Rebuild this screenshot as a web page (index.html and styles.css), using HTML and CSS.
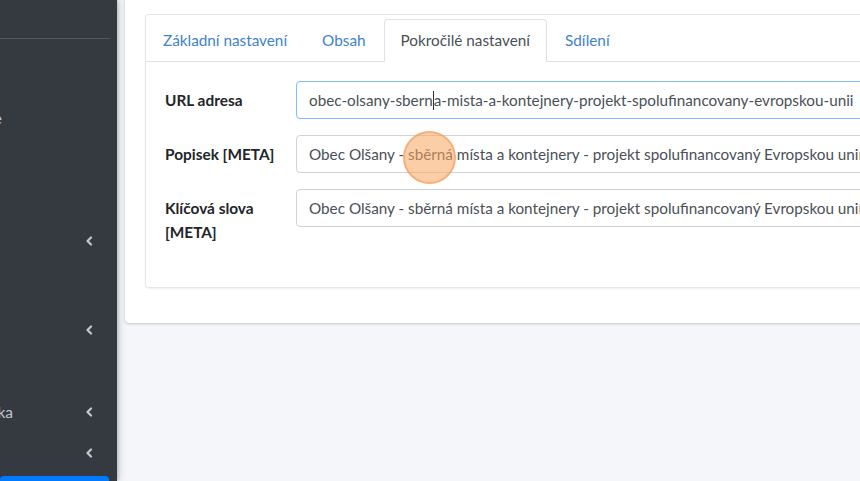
FILE: index.html
```html
<!DOCTYPE html>
<html lang="cs">
<head>
<meta charset="utf-8">
<title>Pokročilé nastavení</title>
<link rel="stylesheet" href="styles.css">
</head>
<body>
<aside class="sidebar">
  <div class="brand"></div>
  <ul class="nav">
    <li class="nav-item"><a class="nav-link"><span class="nav-text sliver"><span>Navigace</span></span></a></li>
    <li class="nav-item"><a class="nav-link"></a></li>
    <li class="nav-item"><a class="nav-link"></a></li>
    <li class="nav-item"><a class="nav-link"><span class="nav-text"></span><svg class="chev" viewBox="0 0 8 10"><polyline points="6,1.5 2.5,5 6,8.5"/></svg></a></li>
    <li class="nav-item tall"><a class="nav-link"></a></li>
    <li class="nav-item"><a class="nav-link"><span class="nav-text"></span><svg class="chev" viewBox="0 0 8 10"><polyline points="6,1.5 2.5,5 6,8.5"/></svg></a></li>
    <li class="nav-item"><a class="nav-link"></a></li>
    <li class="nav-item"><a class="nav-link"><span class="nav-text"><span>Statistika</span></span><svg class="chev" viewBox="0 0 8 10"><polyline points="6,1.5 2.5,5 6,8.5"/></svg></a></li>
    <li class="nav-item"><a class="nav-link"><span class="nav-text"></span><svg class="chev" viewBox="0 0 8 10"><polyline points="6,1.5 2.5,5 6,8.5"/></svg></a></li>
    <li class="nav-item"><a class="nav-link active"><span class="nav-text"></span></a></li>
  </ul>
</aside>
<main class="content">
  <section class="card-outer">
    <div class="card-tabs">
      <div class="tabs-header">
        <ul class="tabs">
          <li class="tab">Základní nastavení</li>
          <li class="tab">Obsah</li>
          <li class="tab active">Pokročilé nastavení</li>
          <li class="tab">Sdílení</li>
        </ul>
      </div>
      <div class="card-body">
        <div class="form-row">
          <label class="form-label">URL adresa</label>
          <div class="form-input focus"><span>obec-olsany-sbern</span><span class="caret"></span><span>a-mista-a-kontejnery-projekt-spolufinancovany-evropskou-unii</span></div>
        </div>
        <div class="form-row">
          <label class="form-label">Popisek [META]</label>
          <div class="form-input">Obec Olšany - sběrná místa a kontejnery - projekt spolufinancovaný Evropskou unií</div>
        </div>
        <div class="form-row">
          <label class="form-label">Klíčová slova [META]</label>
          <div class="form-input">Obec Olšany - sběrná místa a kontejnery - projekt spolufinancovaný Evropskou unií</div>
        </div>
      </div>
    </div>
  </section>
</main>
<div class="click-marker"></div>
</body>
</html>
```
FILE: styles.css
```css
* { box-sizing: border-box; }
html, body { margin: 0; padding: 0; }
body {
  width: 860px;
  height: 481px;
  overflow: hidden;
  display: flex;
  background: #f4f6f9;
  font-family: "Lato", "Liberation Sans", sans-serif;
  font-size: 16px;
  color: #212529;
}

/* Sidebar */
.sidebar {
  width: 117px;
  flex: none;
  background: #343a40;
  box-shadow: 1px 0 3px rgba(0,0,0,.18), 3px 0 8px rgba(0,0,0,.12);
  position: relative;
  z-index: 2;
  overflow: hidden;
}
.brand {
  height: 39px;
  margin-right: 7px;
  border-bottom: 1px solid #4f5962;
}
.nav {
  list-style: none;
  margin: 0;
  padding: 58px 8px 0 0;
}
.nav-item { height: 41px; }
.nav-item.tall { height: 48px; }
.nav-link {
  display: flex;
  align-items: center;
  height: 100%;
  color: #c2c7d0;
  font-size: 15.5px;
}
.nav-text {
  width: 13px;
  display: flex;
  justify-content: flex-end;
  white-space: nowrap;
}
.nav-text.sliver { width: 2px; }
.chev {
  width: 8px;
  height: 10px;
  margin-left: auto;
  margin-right: 16px;
  fill: none;
  stroke: #c2c7d0;
  stroke-width: 2.2;
  stroke-linecap: round;
  stroke-linejoin: round;
}
.nav-link.active {
  background: #007bff;
  border-radius: 4px;
  height: 34px;
  margin-top: 3px;
}

/* Content */
.content {
  flex: 1;
  min-width: 0;
  overflow: hidden;
  padding: 0 0 0 8px;
}
.card-outer {
  width: 1100px;
  margin-top: -10px;
  background: #fff;
  border-radius: 4px;
  box-shadow: 0 0 1px rgba(0,0,0,.14), 0 1px 3px rgba(0,0,0,.18);
  padding: 24px 20px 35px 20px;
}
.card-tabs {
  border: 1px solid #e3e6ea;
  border-radius: 4px;
  background: #fff;
  box-shadow: 0 1px 2px rgba(0,0,0,.06);
}
.tabs-header {
  padding-top: 4px;
  border-bottom: 1px solid #dee2e6;
}
.tabs {
  list-style: none;
  margin: 0 0 -1px 0;
  padding: 0;
  display: flex;
}
.tab {
  height: 43px;
  line-height: 41px;
  padding: 0 16px;
  margin-right: 1px;
  font-size: 15.3px;
  color: #3f82cc;
  border: 1px solid transparent;
  border-radius: 4px 4px 0 0;
  white-space: nowrap;
}
.tab.active {
  color: #495057;
  background: #fff;
  border-color: #dee2e6 #dee2e6 #fff;
}

.card-body {
  padding: 19px 20px 43px 19px;
  display: flex;
  flex-direction: column;
  gap: 16px;
}
.form-row {
  display: grid;
  grid-template-columns: 116px 1fr;
  column-gap: 15px;
  align-items: start;
}
.form-label {
  font-weight: 700;
  font-size: 15.4px;
  line-height: 24px;
  padding-top: 7px;
  color: #212529;
}
.form-input {
  height: 38px;
  line-height: 36px;
  padding: 0 12px;
  border: 1px solid #ced4da;
  border-radius: 4px;
  font-size: 15.28px;
  color: #495057;
  white-space: nowrap;
  overflow: hidden;
}
.form-input.focus {
  border-color: #80bdff;
}
.caret {
  display: inline-block;
  width: 1px;
  height: 19px;
  background: #333;
  vertical-align: -4px;
}

/* Click marker overlay */
.click-marker {
  position: absolute;
  left: 403px;
  top: 131px;
  width: 53px;
  height: 53px;
  border-radius: 50%;
  background: rgba(250, 165, 95, 0.55);
  border: 2px solid rgba(240, 150, 80, 0.55);
  z-index: 5;
}
```
